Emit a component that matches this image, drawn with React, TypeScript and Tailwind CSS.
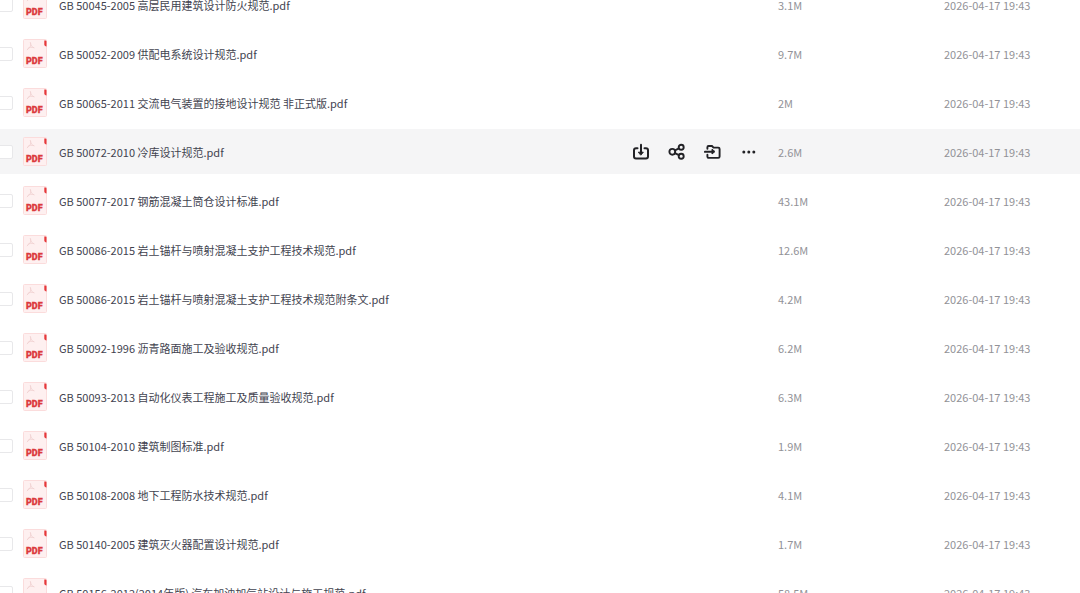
import { useState } from "react";

type FileItem = {
    name: string;
    size: string;
    date: string;
};

const FILES: FileItem[] = [
    { name: "GB 50045-2005 高层民用建筑设计防火规范.pdf", size: "3.1M", date: "2026-04-17 19:43" },
    { name: "GB 50052-2009 供配电系统设计规范.pdf", size: "9.7M", date: "2026-04-17 19:43" },
    { name: "GB 50065-2011 交流电气装置的接地设计规范 非正式版.pdf", size: "2M", date: "2026-04-17 19:43" },
    { name: "GB 50072-2010 冷库设计规范.pdf", size: "2.6M", date: "2026-04-17 19:43" },
    { name: "GB 50077-2017 钢筋混凝土筒仓设计标准.pdf", size: "43.1M", date: "2026-04-17 19:43" },
    { name: "GB 50086-2015 岩土锚杆与喷射混凝土支护工程技术规范.pdf", size: "12.6M", date: "2026-04-17 19:43" },
    { name: "GB 50086-2015 岩土锚杆与喷射混凝土支护工程技术规范附条文.pdf", size: "4.2M", date: "2026-04-17 19:43" },
    { name: "GB 50092-1996 沥青路面施工及验收规范.pdf", size: "6.2M", date: "2026-04-17 19:43" },
    { name: "GB 50093-2013 自动化仪表工程施工及质量验收规范.pdf", size: "6.3M", date: "2026-04-17 19:43" },
    { name: "GB 50104-2010 建筑制图标准.pdf", size: "1.9M", date: "2026-04-17 19:43" },
    { name: "GB 50108-2008 地下工程防水技术规范.pdf", size: "4.1M", date: "2026-04-17 19:43" },
    { name: "GB 50140-2005 建筑灭火器配置设计规范.pdf", size: "1.7M", date: "2026-04-17 19:43" },
    { name: "GB 50156-2012(2014年版) 汽车加油加气站设计与施工规范.pdf", size: "58.5M", date: "2026-04-17 19:43" },
];

function PdfIcon() {
    return (
        <svg width="24" height="30" viewBox="0 0 24 30" className="block" aria-hidden="true">
            <rect x="0.5" y="0.5" width="23" height="28" rx="1" fill="#fef0f0" stroke="#fbdcdc" />
            {/* Acrobat mark */}
            <path
                d="M7.4 3.6c.9 2.6.4 4.3-3.2 7.2M7.4 4c.2 2.6 1.5 4 3.6 4.800M5 9.200c1.600-1 3.600-1.300 5.800-.600"
                fill="none"
                stroke="#f0d2d2"
                strokeWidth="0.9"
                strokeLinecap="round"
            />
            <path d="M21.300 1.500h1.300c.500 0 .900.400.900.900v5c-1.300 0-2.200-.700-2.200-1.800z" fill="#e5383b" />
            <text x="3" y="25" fontSize="9" fontWeight="900" fill="#dc3a3e" stroke="#dc3a3e" strokeWidth="0.3" fontFamily="Roboto, sans-serif">
                PDF
            </text>
        </svg>
    );
}

function DownloadIcon() {
    return (
        <svg width="18" height="18" viewBox="0 0 18 18" fill="none" stroke="currentColor" strokeWidth="2" strokeLinecap="round" strokeLinejoin="round">
            <path d="M5.500 5.200H4a2 2 0 0 0-2 2V13.500a2 2 0 0 0 2 2h10a2 2 0 0 0 2-2V7.200a2 2 0 0 0-2-2h-1.500" />
            <path d="M9 1.800v8.500" />
            <path d="M6.700 9.200h4.600L9 11.900z" fill="currentColor" strokeWidth="1" />
        </svg>
    );
}

function ShareIcon() {
    return (
        <svg width="18" height="18" viewBox="0 0 18 18" fill="none" stroke="currentColor" strokeWidth="1.9" strokeLinecap="round">
            <circle cx="4.300" cy="8.800" r="2.900" />
            <circle cx="13.200" cy="4.300" r="2.500" />
            <circle cx="13.200" cy="13.200" r="2.500" />
            <path d="M7 7.400 10.900 5.400M7 10.200 10.900 12.100" />
        </svg>
    );
}

function MoveIcon() {
    return (
        <svg width="18" height="18" viewBox="0 0 18 18" fill="none" stroke="currentColor" strokeWidth="1.9" strokeLinecap="round" strokeLinejoin="round">
            <path d="M3.400 5.800V4.200A1.200 1.200 0 0 1 4.600 3H8l1.500 1.600h4.800A1.300 1.300 0 0 1 15.600 5.900v7.700a1.300 1.300 0 0 1-1.300 1.300H4.700A1.300 1.300 0 0 1 3.400 13.600v-1.800" />
            <path d="M.900 8.800h8" />
            <path d="M8 6.600v4.400L10.700 8.800z" fill="currentColor" strokeWidth="1" />
        </svg>
    );
}

function MoreIcon() {
    return (
        <svg width="18" height="18" viewBox="0 0 18 18" fill="currentColor">
            <circle cx="3.800" cy="9" r="1.500" />
            <circle cx="8.800" cy="9" r="1.500" />
            <circle cx="13.800" cy="9" r="1.500" />
        </svg>
    );
}

const ACTIONS = [
    { label: "下载", Icon: DownloadIcon },
    { label: "分享", Icon: ShareIcon },
    { label: "移动", Icon: MoveIcon },
    { label: "更多", Icon: MoreIcon },
];

export default function App() {
    const [current, setCurrent] = useState(3);
    const [selected, setSelected] = useState<number[]>([]);

    const toggle = (index: number) => {
        setSelected((prev) => (prev.includes(index) ? prev.filter((i) => i !== index) : [...prev, index]));
    };

    return (
        <main className="h-screen overflow-hidden bg-white font-['Noto_Sans_CJK_SC',sans-serif] text-[11px] leading-4">
            {/* List is scrolled part way into its first row */}
            <table className="-mt-[22px] w-full table-fixed border-separate border-spacing-x-0 border-spacing-y-1">
                <colgroup>
                    <col className="w-[23px]" />
                    <col className="w-9" />
                    <col />
                    <col className="w-[146px]" />
                    <col className="w-[166px]" />
                    <col className="w-[136px]" />
                </colgroup>
                <tbody>
                    {FILES.map((file, index) => {
                        const active = index === current;
                        return (
                            <tr
                                key={file.name}
                                className={active ? "h-[45px] bg-[#f5f5f6]" : "h-[45px]"}
                                onClick={() => setCurrent(index)}
                            >
                                <td className="p-0 align-middle">
                                    <input
                                        id={`file-${index}`}
                                        type="checkbox"
                                        checked={selected.includes(index)}
                                        onChange={() => toggle(index)}
                                        className="-ml-1 block h-3.5 w-[17px] appearance-none rounded-xs border border-[#e8e8ea] bg-white checked:bg-blue-500"
                                    />
                                </td>
                                <td className="p-0 align-middle">
                                    <PdfIcon />
                                </td>
                                <td className="truncate p-0 align-middle text-[#42434f]">
                                    <label htmlFor={`file-${index}`}>{file.name}</label>
                                </td>
                                <td className="p-0 align-middle">
                                    {active && (
                                        <div className="flex items-center gap-[18px] text-[#222226]">
                                            {ACTIONS.map(({ label, Icon }) => (
                                                <button key={label} type="button" aria-label={label} className="cursor-pointer">
                                                    <Icon />
                                                </button>
                                            ))}
                                        </div>
                                    )}
                                </td>
                                <td className="p-0 align-middle text-[#929297]">{file.size}</td>
                                <td className="p-0 align-middle text-[#929297]">{file.date}</td>
                            </tr>
                        );
                    })}
                </tbody>
            </table>
        </main>
    );
}
